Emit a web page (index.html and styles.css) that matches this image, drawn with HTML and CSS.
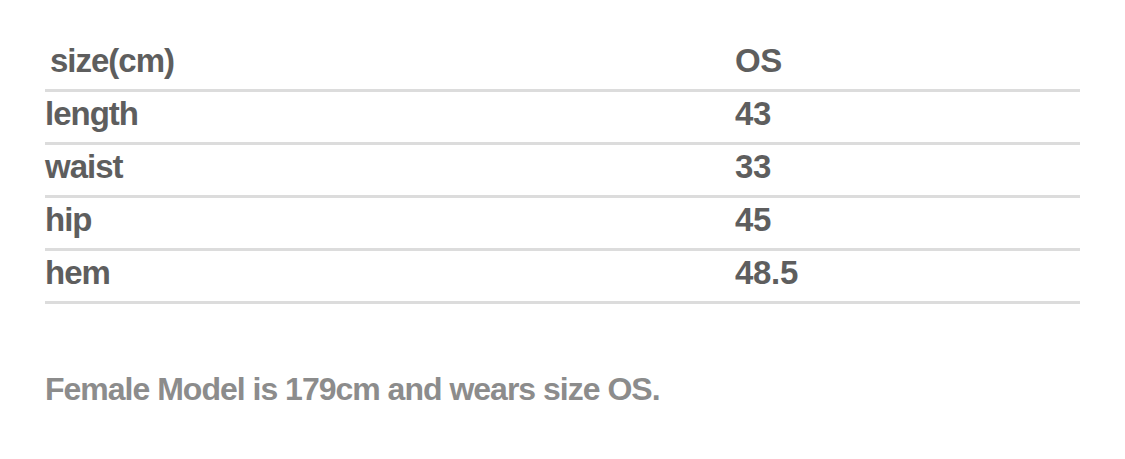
FILE: index.html
```html
<!DOCTYPE html>
<html>
<head>
<meta charset="utf-8">
<link rel="stylesheet" href="styles.css">
</head>
<body>
<div class="page">
  <div class="table">
    <div class="row head"><span class="label indent">size(cm)</span><span class="value">OS</span></div>
    <div class="row"><span class="label">length</span><span class="value">43</span></div>
    <div class="row"><span class="label">waist</span><span class="value">33</span></div>
    <div class="row"><span class="label">hip</span><span class="value">45</span></div>
    <div class="row"><span class="label">hem</span><span class="value">48.5</span></div>
  </div>
  <p class="note">Female Model is 179cm and wears size OS.</p>
</div>
</body>
</html>
```
FILE: styles.css
```css
html, body {
  margin: 0;
  padding: 0;
  background: #ffffff;
}
.page {
  padding: 39px 45px 0 45px;
  font-family: "Liberation Sans", Arial, sans-serif;
  font-weight: bold;
}
.table {
  width: 1035px;
  display: flex;
  flex-direction: column;
}
.row {
  display: grid;
  grid-template-columns: 690px 1fr;
  height: 44px;
  line-height: 44px;
  padding-bottom: 6px;
  border-bottom: 3px solid #dcdcdc;
  font-size: 33px;
  letter-spacing: -1px;
  color: #5e5e5e;
}
.value {
  letter-spacing: -0.3px;
}
.indent {
  padding-left: 5px;
}
.note {
  margin: 65px 0 0 0;
  font-size: 32px;
  letter-spacing: -1px;
  line-height: 40px;
  color: #8c8c8c;
}
```
